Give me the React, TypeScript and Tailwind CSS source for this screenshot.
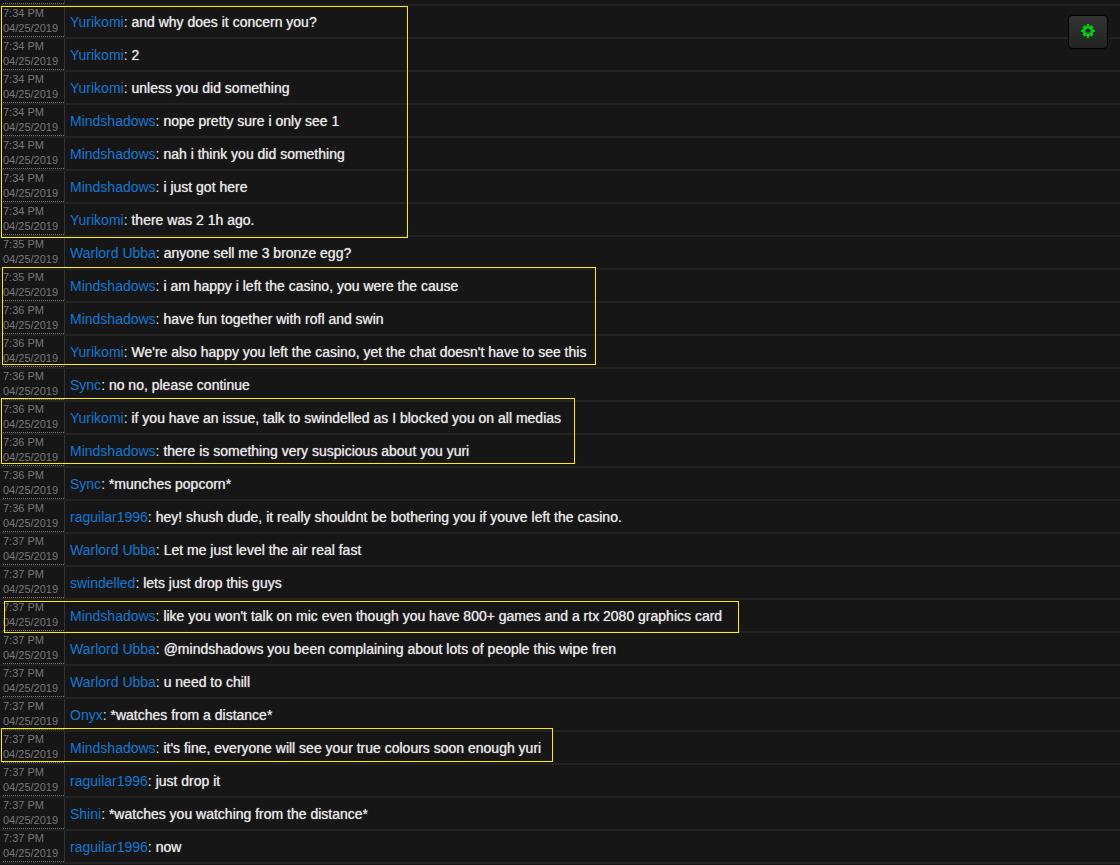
type Message = {
    time: string;
    user: string;
    text: string;
};

const DATE = "04/25/2019";

const messages: Message[] = [
    { time: "7:34 PM", user: "Yurikomi", text: "and why does it concern you?" },
    { time: "7:34 PM", user: "Yurikomi", text: "2" },
    { time: "7:34 PM", user: "Yurikomi", text: "unless you did something" },
    { time: "7:34 PM", user: "Mindshadows", text: "nope pretty sure i only see 1" },
    { time: "7:34 PM", user: "Mindshadows", text: "nah i think you did something" },
    { time: "7:34 PM", user: "Mindshadows", text: "i just got here" },
    { time: "7:34 PM", user: "Yurikomi", text: "there was 2 1h ago." },
    { time: "7:35 PM", user: "Warlord Ubba", text: "anyone sell me 3 bronze egg?" },
    { time: "7:35 PM", user: "Mindshadows", text: "i am happy i left the casino, you were the cause" },
    { time: "7:36 PM", user: "Mindshadows", text: "have fun together with rofl and swin" },
    { time: "7:36 PM", user: "Yurikomi", text: "We're also happy you left the casino, yet the chat doesn't have to see this" },
    { time: "7:36 PM", user: "Sync", text: "no no, please continue" },
    { time: "7:36 PM", user: "Yurikomi", text: "if you have an issue, talk to swindelled as I blocked you on all medias" },
    { time: "7:36 PM", user: "Mindshadows", text: "there is something very suspicious about you yuri" },
    { time: "7:36 PM", user: "Sync", text: "*munches popcorn*" },
    { time: "7:36 PM", user: "raguilar1996", text: "hey! shush dude, it really shouldnt be bothering you if youve left the casino." },
    { time: "7:37 PM", user: "Warlord Ubba", text: "Let me just level the air real fast" },
    { time: "7:37 PM", user: "swindelled", text: "lets just drop this guys" },
    { time: "7:37 PM", user: "Mindshadows", text: "like you won't talk on mic even though you have 800+ games and a rtx 2080 graphics card" },
    { time: "7:37 PM", user: "Warlord Ubba", text: "@mindshadows you been complaining about lots of people this wipe fren" },
    { time: "7:37 PM", user: "Warlord Ubba", text: "u need to chill" },
    { time: "7:37 PM", user: "Onyx", text: "*watches from a distance*" },
    { time: "7:37 PM", user: "Mindshadows", text: "it's fine, everyone will see your true colours soon enough yuri" },
    { time: "7:37 PM", user: "raguilar1996", text: "just drop it" },
    { time: "7:37 PM", user: "Shini", text: "*watches you watching from the distance*" },
    { time: "7:37 PM", user: "raguilar1996", text: "now" },
];

// Marker boxes drawn over the log
const highlights = [
    "left-[1px] top-[6px] w-[407px] h-[232px]",
    "left-[2px] top-[267px] w-[594px] h-[98px]",
    "left-[1px] top-[398px] w-[574px] h-[66px]",
    "left-[4px] top-[601px] w-[735px] h-[32px]",
    "left-[1px] top-[728px] w-[552px] h-[34px]",
];

function ChatRow({ message }: { message: Message }) {
    return (
        <li className="flex border-b-2 border-[#222222]">
            <time className="ml-[3px] w-[61px] shrink-0 border-b border-dotted border-[#777777] text-[11px] leading-[15px] text-[#777777]">
                <span className="block">{message.time}</span>
                <span className="block">{DATE}</span>
            </time>

            <p className="flex-1 border-l border-[#333333] pt-0.5 pl-[5px] text-sm leading-[29px] text-[#e6e6e6]">
                <a href="#" className="text-[#1778d3]">
                    {message.user}
                </a>
                : <span className="text-shadow-[0_0_1px_#cccccc]">{message.text}</span>
            </p>
        </li>
    );
}

function GearIcon() {
    return (
        <svg
            viewBox="0 0 14 14"
            className="mb-0.5 h-3.5 w-3.5"
            fill="none"
            stroke="#00cc11"
            aria-hidden="true"
        >
            <circle cx="7" cy="7" r="3.9" strokeWidth="2.800" />
            <path strokeWidth="2.200" d="M7 0v3M7 11v3M0 7h3M11 7h3" />
            <path strokeWidth="3" d="M2.400 2.400l2 2M9.600 9.600l2 2M11.600 2.400l-2 2M4.400 9.600l-2 2" />
        </svg>
    );
}

function App() {
    return (
        <main className="relative min-h-screen overflow-hidden bg-[#161616] font-['Liberation_Sans',Arial,sans-serif]">
            {/* Tail of the row scrolled off the top */}
            <div className="flex h-[6px] border-b-2 border-[#222222]">
                <div className="ml-[3px] w-[61px] border-b border-dotted border-[#777777]"></div>
                <div className="flex-1 border-l border-[#333333]"></div>
            </div>

            <ul>
                {messages.map((message, index) => (
                    <ChatRow key={index} message={message} />
                ))}
            </ul>

            {highlights.map((box) => (
                <div
                    key={box}
                    className={`pointer-events-none absolute border border-[#ffee00] ${box}`}
                ></div>
            ))}

            {/* SETTINGS */}
            <button
                type="button"
                aria-label="Settings"
                className="absolute top-[15px] right-3 flex h-[34px] w-10 items-center justify-center rounded border border-black bg-linear-to-b from-[#333333] to-[#222222]"
            >
                <GearIcon />
            </button>
        </main>
    );
}

export default App;
